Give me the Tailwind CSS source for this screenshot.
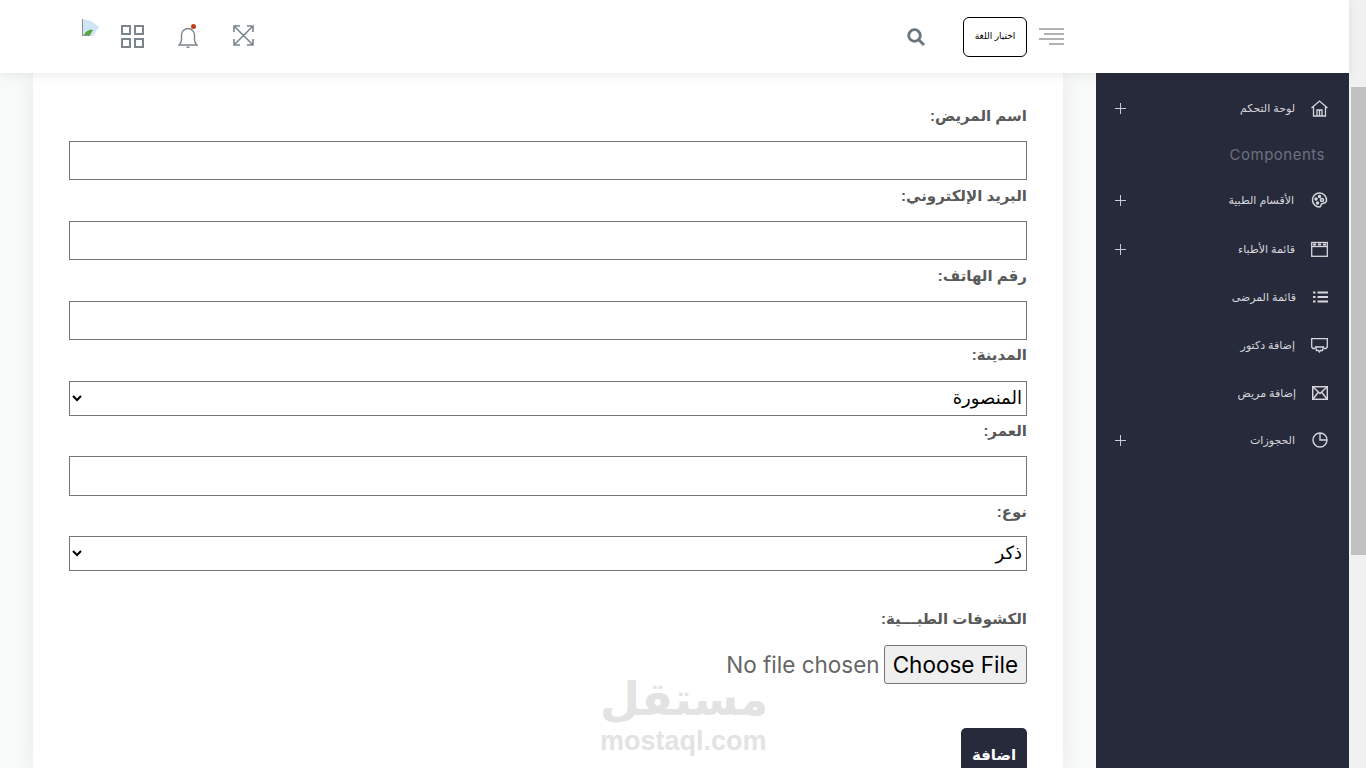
<!DOCTYPE html>
<html lang="ar">
<head>
  <meta charset="UTF-8">
  <title>إضافة مريض</title>
  <script src="https://cdn.jsdelivr.net/npm/@tailwindcss/browser@4"></script>
</head>
<body class="bg-white font-['Liberation_Sans','DejaVu_Sans',sans-serif] overflow-hidden">
<div class="relative flex h-[768px] w-[1366px] overflow-hidden">
  <div class="flex w-[1349px] flex-col">

    <!-- top bar -->
    <header class="relative z-10 flex h-[73px] shrink-0 items-center bg-white pl-[82px] pr-[285px] shadow-[0_2px_10px_rgba(0,0,0,0.08)]">
      <svg class="mb-[18px] h-[17px] w-[17px]" viewBox="0 0 17 17">
        <path d="M0 0l9 2 8 6-6 9H0z" fill="#cfe4f5"/>
        <path d="M2 16c1-3 5-6 9-5l-3 5z" fill="#5aa83c"/>
        <path d="M.5 0v17M0 16.500h8" stroke="#8a8f94"/>
      </svg>
      <svg class="ml-[22px] h-[23px] w-[23px]" viewBox="0 0 23 23" fill="none" stroke="#7c858c" stroke-width="2">
        <rect x="1" y="1" width="8" height="8"/><rect x="14" y="1" width="8" height="8"/>
        <rect x="1" y="14" width="8" height="8"/><rect x="14" y="14" width="8" height="8"/>
      </svg>
      <span class="relative ml-[34px] h-[24px] w-[20px]">
        <svg class="absolute left-0 top-0 h-[24px] w-[20px]" viewBox="0 0 20 24" fill="none" stroke="#7c858c" stroke-width="1.4">
          <path d="M1 20c2-1.500 2.500-3 2.500-5.500V10a6.500 6.500 0 0 1 13 0v4.500c0 2.500.5 4 2.500 5.500z"/>
          <path d="M8.500 21.500a1.700 1.700 0 0 0 3 0" />
        </svg>
        <span class="absolute left-[13px] top-[-1px] h-[5px] w-[5px] rounded-full bg-[#c0401c]"></span>
      </span>
      <svg class="ml-[35px] mb-[2px] h-[21px] w-[21px]" viewBox="0 0 21 21" fill="none" stroke="#7c858c" stroke-width="1.6">
        <path d="M1 1l19 19M20 1L1 20M1 7V1h6M14 1h6v6M1 14v6h6M14 20h6v-6"/>
      </svg>
      <svg class="ml-auto h-[18px] w-[18px]" viewBox="0 0 18 18" fill="none" stroke="#6c757d" stroke-width="2.800">
        <circle cx="7.500" cy="7.500" r="5.800"/><path d="M12 12l5 5"/>
      </svg>
      <button class="ml-[38px] h-[40px] w-[64px] rounded-[6px] border border-black bg-white text-[9px] text-black">اختيار اللغة</button>
      <svg class="ml-[12px] h-[18px] w-[25px]" viewBox="0 0 25 18" stroke="#999" stroke-width="1.500">
        <path d="M0 1h25M5 6h20M0 11h25M10 16h15" />
      </svg>
    </header>

    <div class="flex min-h-0 flex-1">
      <!-- content area -->
      <main class="w-[1096px] bg-[#f8f9f9] pl-[33px] pr-[33px]">
        <div class="h-full bg-white px-[36px] pt-[27px] shadow-[0_0_20px_rgba(0,0,0,0.07)]">
          <form dir="rtl" class="flex flex-col text-[15px] font-bold text-[#595959]">
            <label class="mb-[8px] h-[33px] leading-[31px]">اسم المريض:</label>
            <input type="text" class="h-[39px] border border-[#767676] bg-white">
            <label class="mb-[8px] mt-[1px] h-[32px] leading-[30px]">البريد الإلكتروني:</label>
            <input type="text" class="h-[39px] border border-[#767676] bg-white">
            <label class="mb-[8px] mt-[1px] h-[32px] leading-[30px]">رقم الهاتف:</label>
            <input type="text" class="h-[39px] border border-[#767676] bg-white">
            <label class="mb-[8px] mt-[1px] h-[31px] leading-[27px]">المدينة:</label>
            <select class="mt-[1px] h-[35px] border border-[#767676] bg-white pb-[2px] text-[18px] font-normal text-black">
              <option>المنصورة</option>
            </select>
            <label class="mb-[8px] h-[32px] leading-[30px]">العمر:</label>
            <input type="text" class="h-[40px] border border-[#767676] bg-white">
            <label class="mb-[8px] h-[32px] leading-[32px]">نوع:</label>
            <select class="h-[35px] border border-[#767676] bg-white pb-[2px] text-[18px] font-normal text-black">
              <option>ذكر</option>
            </select>
            <label class="mb-[8px] mt-[32px] h-[34px] leading-[32px]">الكشوفات الطبـــية:</label>
            <input type="file" class="h-[39px] font-['Inter',sans-serif] text-[22.5px] font-normal text-[#666] file:h-[39px] file:rounded-[3px] file:border file:border-[#767676] file:bg-[#efefef] file:px-[8px] file:font-['Inter',sans-serif] file:text-[22.5px] file:text-black">
            <div class="mt-[44px]">
              <button type="button" class="h-[54px] w-[66px] rounded-[5px] bg-[#272a3a] text-[15px] font-bold text-white">اضافة</button>
            </div>
          </form>
        </div>
      </main>

      <!-- sidebar -->
      <aside dir="rtl" class="flex w-[253px] flex-col bg-[#272a3a] pl-[19px] pr-[21px] pt-[11px] text-[11px] text-[#d5d7dd]">
        <div class="flex h-[48px] items-center">
          <svg class="h-[17px] w-[17px]" viewBox="0 0 17 17" fill="none" stroke="#d5d7dd" stroke-width="1.300"><path d="M.5 8L8.500 1l8 7M2.500 6.500V16h12V6.500M6 16v-6h5v6M8.500 10v6"/></svg>
          <span class="mr-[16px]">لوحة التحكم</span>
          <svg class="mr-auto h-[11px] w-[11px]" viewBox="0 0 11 11" stroke="#c9cbd2"><path d="M5.500 0v11M0 5.500h11"/></svg>
        </div>
        <div class="flex h-[46px] items-center pt-[1px] font-['Inter',sans-serif] text-[15px] tracking-[0.5px] text-[#6d7080]"><span dir="ltr" class="mr-[3px]">Components</span></div>
        <div class="-mt-[2px] flex h-[48px] items-center">
          <svg class="h-[16px] w-[17px]" viewBox="0 0 16 16" fill="none" stroke="#d5d7dd" stroke-width="1.500"><path d="M8 1a7 7 0 1 0 0 14c2 0 1-2 2-3s4 0 5-3A7 7 0 0 0 8 1z"/><circle cx="4.500" cy="7" r="1" fill="#d5d7dd"/><circle cx="8" cy="4.500" r="1" fill="#d5d7dd"/><circle cx="6" cy="11" r="1" fill="#d5d7dd"/><circle cx="10.500" cy="8" r="1.500"/></svg>
          <span class="mr-[17px]">الأقسام الطبية</span>
          <svg class="mr-auto h-[11px] w-[11px]" viewBox="0 0 11 11" stroke="#c9cbd2"><path d="M5.500 0v11M0 5.500h11"/></svg>
        </div>
        <div class="mt-[1px] flex h-[48px] items-center">
          <svg class="h-[16px] w-[17px]" viewBox="0 0 17 16" fill="none" stroke="#d5d7dd" stroke-width="1.300"><rect x=".7" y="1.500" width="15.600" height="13.800"/><path d="M.7 5.500h15.600" stroke-width="1.300"/><path d="M2 3.500h3M7 3.500h3M12 3.500h3" stroke-width="1.800"/></svg>
          <span class="mr-[16px]">قائمة الأطباء</span>
          <svg class="mr-auto h-[11px] w-[11px]" viewBox="0 0 11 11" stroke="#c9cbd2"><path d="M5.500 0v11M0 5.500h11"/></svg>
        </div>
        <div class="flex h-[48px] items-center">
          <svg class="h-[12px] w-[15px]" viewBox="0 0 15 12" stroke="#d5d7dd" stroke-width="2"><path d="M0 1.500h2.500M4.500 1.500H15M0 6h2.500M4.500 6H15M0 10.500h2.500M4.500 10.500H15"/></svg>
          <span class="mr-[17px]">قائمة المرضى</span>
        </div>
        <div class="flex h-[48px] items-center">
          <svg class="h-[15px] w-[17px]" viewBox="0 0 17 15" fill="none" stroke="#d5d7dd" stroke-width="1.300"><path d="M4 10.500H2L.7 9V.7h15.600V9L15 10.500h-2"/><path d="M4.500 9h8l-1 3.500H9.500l-1 1.500-1-1.500h-2z"/></svg>
          <span class="mr-[16px]">إضافة دكتور</span>
        </div>
        <div class="flex h-[48px] items-center">
          <svg class="h-[14px] w-[16px]" viewBox="0 0 16 14" fill="none" stroke="#d5d7dd" stroke-width="1.500"><rect x=".7" y=".7" width="14.600" height="12.600"/><path d="M1 1l7 6.500L15 1M1 13l5.500-7M15 13L9.500 6"/></svg>
          <span class="mr-[16px]">إضافة مريض</span>
        </div>
        <div class="-mt-[1px] flex h-[48px] items-center">
          <svg class="h-[16px] w-[16px]" viewBox="0 0 16 16" fill="none" stroke="#d5d7dd" stroke-width="1.400"><circle cx="8" cy="8" r="7"/><path d="M8 1v7h7"/></svg>
          <span class="mr-[17px]">الحجوزات</span>
          <svg class="mr-auto h-[11px] w-[11px]" viewBox="0 0 11 11" stroke="#c9cbd2"><path d="M5.500 0v11M0 5.500h11"/></svg>
        </div>
      </aside>
    </div>
  </div>

  <!-- scrollbar -->
  <div class="w-[17px] bg-[#f1f1f1] pt-[87px]">
    <div class="ml-[2px] h-[468px] bg-[#c1c1c1]"></div>
  </div>

  <!-- watermark -->
  <div class="absolute left-[600px] top-[673px] z-20 w-[166px] text-center font-bold leading-none text-[#e3e3e3]">
    <div class="font-['DejaVu_Sans',sans-serif] text-[46px] leading-[53px]">مستقل</div>
    <div class="font-['Liberation_Sans',sans-serif] text-[27px] leading-[30px]">mostaql.com</div>
  </div>
</div>
</body>
</html>
